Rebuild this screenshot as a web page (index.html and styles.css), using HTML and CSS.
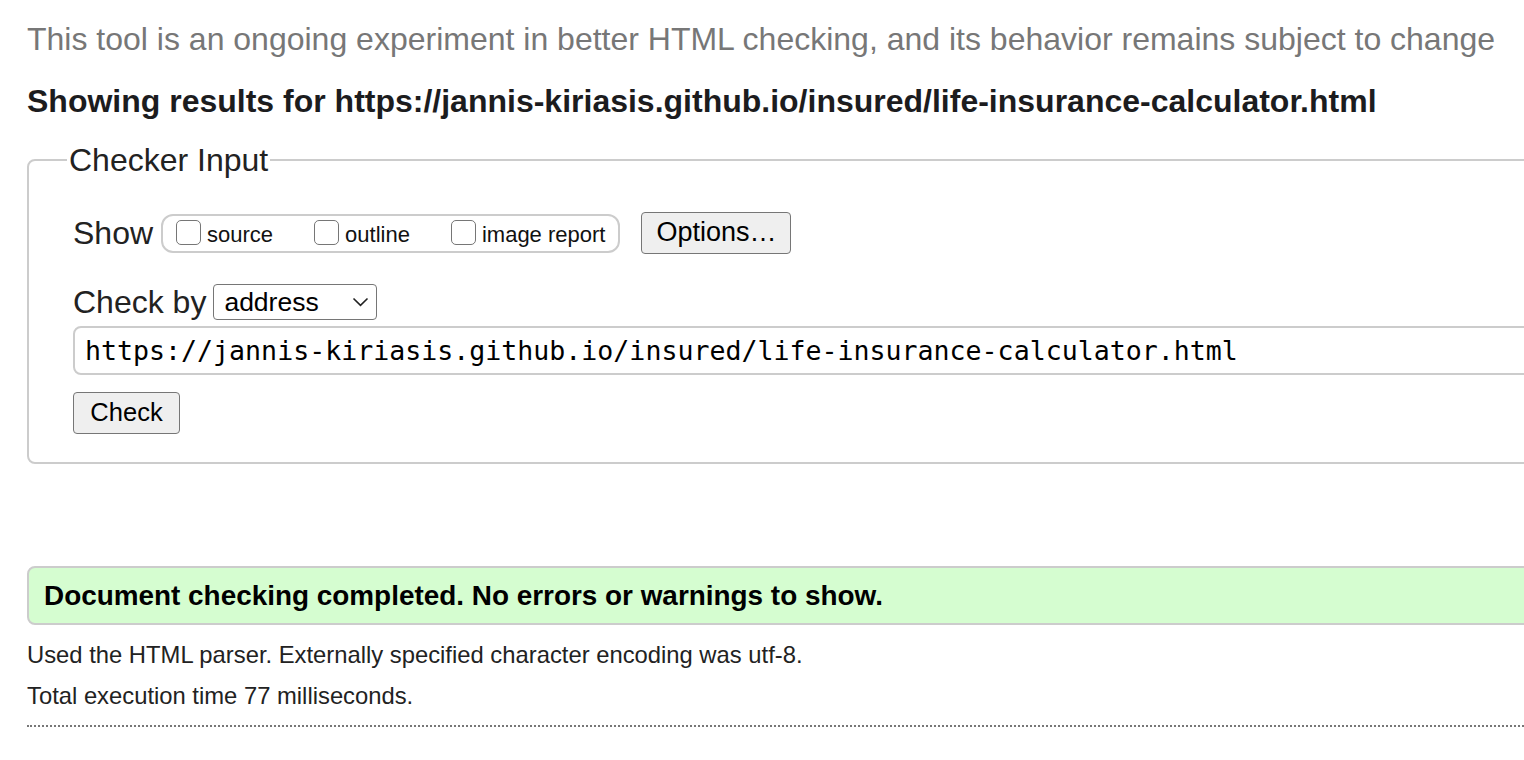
FILE: index.html
```html
<!DOCTYPE html>
<html>
<head>
<meta charset="utf-8">
<link rel="stylesheet" href="styles.css">
</head>
<body>
<div class="page">
  <p class="intro">This tool is an ongoing experiment in better HTML checking, and its behavior remains subject to change</p>
  <h2 class="showing">Showing results for https://jannis-kiriasis.github.io/insured/life-insurance-calculator.html</h2>
  <fieldset class="checker">
    <legend class="legend">Checker Input</legend>
    <div class="row show-row">
      <span class="lbl">Show</span>
      <div class="group">
        <label class="opt"><span class="box"></span>source</label>
        <label class="opt"><span class="box"></span>outline</label>
        <label class="opt"><span class="box"></span>image report</label>
      </div>
      <span class="btn options">Options…</span>
    </div>
    <div class="row by-row">
      <span class="lbl">Check by</span>
      <span class="select">address<svg class="chev" width="17" height="10" viewBox="0 0 17 10"><path d="M1.5 1.5 L8.5 8.3 L15.5 1.5" fill="none" stroke="#222" stroke-width="1.6"/></svg></span>
    </div>
    <div class="url">https://jannis-kiriasis.github.io/insured/life-insurance-calculator.html</div>
    <span class="btn check">Check</span>
  </fieldset>
  <div class="success">Document checking completed. No errors or warnings to show.</div>
  <p class="info first">Used the HTML parser. Externally specified character encoding was utf-8.</p>
  <p class="info">Total execution time 77 milliseconds.</p>
  <div class="dots"></div>
</div>
</body>
</html>
```
FILE: styles.css
```css
html, body {
  margin: 0;
  padding: 0;
  background: #fff;
  overflow: hidden;
}
body {
  font-family: "Liberation Sans", Arial, sans-serif;
  color: #222;
  width: 1524px;
  height: 760px;
}
.page {
  padding-left: 27px;
  width: 1700px;
}
.intro {
  margin: 0;
  padding-top: 19px;
  font-size: 32px;
  line-height: 40px;
  color: #777;
  white-space: nowrap;
}
.showing {
  margin: 22px 0 0 0;
  font-size: 32px;
  line-height: 40px;
  font-weight: bold;
  color: #1c1c1e;
  white-space: nowrap;
}
.checker {
  margin: 21px 0 0 0;
  border: 2px solid #ccc;
  border-radius: 8px;
  padding: 34px 0 28px 44px;
  width: 1600px;
  min-width: 0;
}
.legend {
  font-size: 32px;
  line-height: 36px;
  padding: 0 2px;
  margin-left: -6px;
  color: #222;
}
.row {
  display: flex;
  align-items: center;
}
.lbl {
  font-size: 32px;
  line-height: 36px;
  color: #222;
}
.show-row {
  height: 42px;
}
.group {
  display: flex;
  align-items: center;
  margin-left: 8px;
  height: 39px;
  box-sizing: border-box;
  border: 2px solid #ccc;
  border-radius: 12px;
  padding: 0 13px 0 13px;
  gap: 41px;
}
.opt {
  display: flex;
  align-items: flex-end;
  font-size: 22px;
  line-height: 24px;
  color: #111;
  height: 27px;
}
.box {
  width: 25px;
  height: 25px;
  box-sizing: border-box;
  border: 1.5px solid #767676;
  border-radius: 5px;
  margin-right: 6px;
  align-self: flex-start;
}
.btn {
  display: inline-block;
  background: #efefef;
  border: 1.5px solid #767676;
  border-radius: 4px;
  color: #000;
  box-sizing: border-box;
  text-align: center;
}
.options {
  margin-left: 21px;
  width: 150px;
  height: 42px;
  line-height: 39px;
  font-size: 27px;
}
.by-row {
  margin-top: 30px;
  height: 36px;
}
.select {
  margin-left: 7px;
  box-sizing: border-box;
  width: 164px;
  height: 36px;
  border: 1.5px solid #767676;
  border-radius: 4px;
  font-size: 26.5px;
  color: #000;
  padding: 0 7px 0 10px;
  display: flex;
  align-items: center;
  justify-content: space-between;
}
.url {
  margin-top: 6px;
  box-sizing: border-box;
  height: 49px;
  border: 2px solid #ccc;
  border-radius: 8px;
  font-family: "DejaVu Sans Mono", "Liberation Mono", monospace;
  font-size: 26.6px;
  line-height: 45px;
  padding-left: 10px;
  color: #000;
  white-space: nowrap;
}
.check {
  margin-top: 17px;
  width: 107px;
  height: 42px;
  line-height: 39px;
  font-size: 25.5px;
}
.success {
  margin-top: 102px;
  box-sizing: border-box;
  width: 1600px;
  height: 59px;
  background: #d5fdd0;
  border: 2px solid #ccc;
  border-radius: 8px;
  font-weight: bold;
  font-size: 27.9px;
  line-height: 55px;
  padding-left: 15px;
  color: #000;
  white-space: nowrap;
}
.info {
  margin: 11px 0 0 0;
  font-size: 23.8px;
  line-height: 30px;
  color: #222;
  white-space: nowrap;
}
.info.first {
  margin-top: 15px;
}
.dots {
  margin-top: 14px;
  width: 1600px;
  border-top: 2px dotted #777;
}
```
